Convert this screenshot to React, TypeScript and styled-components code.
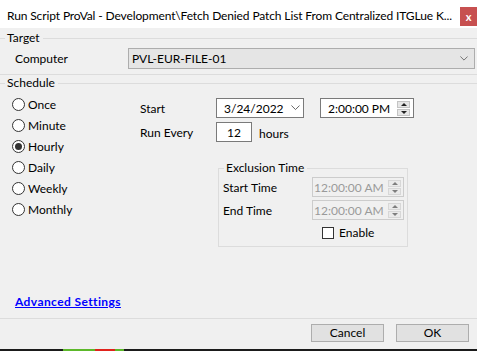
import styled, { createGlobalStyle } from "styled-components";

const GlobalStyle = createGlobalStyle`
  html, body {
    margin: 0;
    padding: 0;
    background: #f0f0f0;
  }
  body {
    font-family: "Segoe UI", Lato, "Liberation Sans", sans-serif;
    font-size: 12px;
    color: #000;
  }
`;

const Window = styled.div`
  width: 477px;
  height: 351px;
  display: flex;
  flex-direction: column;
  background: #f0f0f0;
  overflow: hidden;
`;

const TitleBar = styled.div`
  height: 28px;
  flex: none;
  display: flex;
  align-items: flex-start;
  background: #fff;
`;

const Title = styled.div`
  flex: 1;
  min-width: 0;
  padding: 8px 0 0 7px;
  line-height: 16px;
  font-size: 12px;
  letter-spacing: -0.12px;
  white-space: nowrap;
  overflow: hidden;
`;

const CloseButton = styled.div`
  width: 17px;
  height: 19px;
  flex: none;
  margin-top: 7px;
  background: #c75050;
  color: #fff;
  font-size: 11px;
  font-weight: 700;
  display: flex;
  align-items: center;
  justify-content: center;
`;

const Group = styled.section<{ $grow?: boolean }>`
  display: flex;
  flex-direction: column;
  border-bottom: 1px solid #dcdcdc;
  flex: ${(p) => (p.$grow ? 1 : "none")};
`;

const GroupHeader = styled.div<{ $top?: number }>`
  display: flex;
  align-items: center;
  height: 16px;
  line-height: 16px;
  margin-top: ${(p) => p.$top ?? 0}px;

  &::before {
    content: "";
    width: 5px;
    border-top: 1px solid #dcdcdc;
  }
  &::after {
    content: "";
    flex: 1;
    border-top: 1px solid #dcdcdc;
  }
  span {
    padding: 0 3px 0 2px;
  }
`;

const ComputerRow = styled.div`
  display: flex;
  align-items: center;
  margin-top: 2px;
  padding-bottom: 5px;
`;

const RowLabel = styled.div<{ $width: number; $indent?: number }>`
  box-sizing: border-box;
  width: ${(p) => p.$width}px;
  padding-left: ${(p) => p.$indent ?? 0}px;
  padding-top: ${(p) => (p.$indent ? 0 : 3)}px;
  flex: none;
`;

const Combo = styled.div`
  width: 347px;
  height: 21px;
  box-sizing: border-box;
  background: #e5e5e5;
  border: 1px solid #adadad;
  display: flex;
  align-items: center;
  padding: 0 6px 0 3px;
  justify-content: space-between;
`;

const Columns = styled.div`
  display: flex;
  flex: 1;
`;

const RadioList = styled.div`
  width: 128px;
  padding: 3px 0 0 12px;
  display: flex;
  flex-direction: column;
`;

const RadioRow = styled.label`
  display: flex;
  align-items: center;
  gap: 3px;
  height: 21px;
`;

const RadioDot = styled.span<{ $on?: boolean }>`
  width: 13px;
  height: 13px;
  box-sizing: border-box;
  border: 1px solid #333;
  border-radius: 50%;
  background: #fff;
  display: flex;
  align-items: center;
  justify-content: center;

  &::after {
    content: "";
    width: 7px;
    height: 7px;
    border-radius: 50%;
    background: ${(p) => (p.$on ? "#333" : "transparent")};
  }
`;

const Panel = styled.div`
  display: grid;
  grid-template-columns: 76px auto;
  grid-auto-rows: min-content;
  row-gap: 4px;
  padding-top: 7px;
`;

const Controls = styled.div<{ $gap: number }>`
  display: flex;
  align-items: center;
  gap: ${(p) => p.$gap}px;
`;

const Unit = styled.span`
  padding-top: 3px;
`;

const Field = styled.div<{ $width: number; $disabled?: boolean; $center?: boolean }>`
  width: ${(p) => p.$width}px;
  height: 20px;
  box-sizing: border-box;
  border: 1px solid ${(p) => (p.$disabled ? "#cccccc" : "#7a7a7a")};
  background: ${(p) => (p.$disabled ? "#f0f0f0" : "#fff")};
  color: ${(p) => (p.$disabled ? "#9a9a9a" : "#000")};
  display: flex;
  align-items: center;
  justify-content: ${(p) => (p.$center ? "center" : "space-between")};
  padding: ${(p) => (p.$center ? "0" : p.$disabled ? "0 2px 0 1px" : "0 3px 0 7px")};
`;

const Spinner = styled.div<{ $disabled?: boolean }>`
  width: 13px;
  height: 15px;
  display: flex;
  flex-direction: column;
  gap: 1px;
  opacity: ${(p) => (p.$disabled ? 0.55 : 1)};
`;

const SpinHalf = styled.div<{ $down?: boolean }>`
  flex: 1;
  background: #e6e6e6;
  border: 1px solid #c4c4c4;
  display: flex;
  align-items: center;
  justify-content: center;

  &::after {
    content: "";
    border-left: 3px solid transparent;
    border-right: 3px solid transparent;
    ${(p) => (p.$down ? "border-top: 3px solid #222;" : "border-bottom: 3px solid #222;")}
  }
`;

const Chevron = ({ size }: { size: number }) => (
  <svg width={size} height={size / 2 + 1} viewBox="0 0 10 6" fill="none">
    <path d="M0.5 0.5 L5 5 L9.5 0.5" stroke="#555" strokeWidth="1" />
  </svg>
);

const Exclusion = styled.fieldset`
  grid-column: 2;
  margin: 14px 0 0 2px;
  width: 189px;
  box-sizing: border-box;
  border: 1px solid #dcdcdc;
  padding: 1px 3px 6px 4px;
  display: grid;
  grid-template-columns: 89px auto;
  row-gap: 3px;

  legend {
    padding: 0 3px 0 2px;
    margin-left: 1px;
    line-height: 16px;
  }
`;

const CheckRow = styled.label`
  grid-column: 2;
  display: flex;
  align-items: center;
  gap: 5px;
  padding-left: 10px;
  height: 15px;
  margin-top: 2px;
`;

const CheckBox = styled.span`
  width: 12px;
  height: 12px;
  box-sizing: border-box;
  border: 1px solid #333;
  background: #fff;
`;

const LinkRow = styled.div`
  padding: 0 0 8px 15px;
  line-height: 16px;
`;

const Link = styled.a`
  color: #0000ff;
  font-weight: 700;
  letter-spacing: 0.4px;
  text-decoration: underline;
`;

const Footer = styled.div`
  height: 30px;
  flex: none;
  display: flex;
  justify-content: flex-end;
  align-items: flex-start;
  gap: 12px;
  padding: 5px 8px 0 0;
  box-sizing: border-box;
`;

const Button = styled.button`
  width: 73px;
  height: 18px;
  box-sizing: border-box;
  background: #e1e1e1;
  border: 1px solid #adadad;
  font: inherit;
  line-height: 14px;
  padding: 0;
`;

const Taskbar = styled.div`
  height: 2px;
  flex: none;
  display: flex;
  background: #1b1b1b;
`;

const TaskSeg = styled.div<{ $color: string; $width: number; $left: number }>`
  width: ${(p) => p.$width}px;
  margin-left: ${(p) => p.$left}px;
  background: ${(p) => p.$color};
`;

const radios = ["Once", "Minute", "Hourly", "Daily", "Weekly", "Monthly"];

export default function App() {
  return (
    <>
      <GlobalStyle />
      <Window>
        <TitleBar>
          <Title>
            Run Script ProVal - Development\Fetch Denied Patch List From Centralized ITGLue K...
          </Title>
          <CloseButton>x</CloseButton>
        </TitleBar>

        <Group>
          <GroupHeader $top={2}>
            <span>Target</span>
          </GroupHeader>
          <ComputerRow>
            <RowLabel $width={128} $indent={15}>
              Computer
            </RowLabel>
            <Combo>
              <span>PVL-EUR-FILE-01</span>
              <Chevron size={8} />
            </Combo>
          </ComputerRow>
        </Group>

        <Group $grow>
          <GroupHeader>
            <span>Schedule</span>
          </GroupHeader>
          <Columns>
            <RadioList>
              {radios.map((r) => (
                <RadioRow key={r}>
                  <RadioDot $on={r === "Hourly"} />
                  {r}
                </RadioRow>
              ))}
            </RadioList>
            <Panel>
              <RowLabel $width={76}>Start</RowLabel>
              <Controls $gap={16}>
                <Field $width={88}>
                  <span>3/24/2022</span>
                  <Chevron size={9} />
                </Field>
                <Field $width={94}>
                  <span>2:00:00 PM</span>
                  <Spinner>
                    <SpinHalf />
                    <SpinHalf $down />
                  </Spinner>
                </Field>
              </Controls>
              <RowLabel $width={76}>Run Every</RowLabel>
              <Controls $gap={7}>
                <Field $width={36} $center>
                  12
                </Field>
                <Unit>hours</Unit>
              </Controls>
              <Exclusion>
                <legend>Exclusion Time</legend>
                <RowLabel $width={89}>Start Time</RowLabel>
                <Field $width={92} $disabled>
                  <span>12:00:00 AM</span>
                  <Spinner $disabled>
                    <SpinHalf />
                    <SpinHalf $down />
                  </Spinner>
                </Field>
                <RowLabel $width={89}>End Time</RowLabel>
                <Field $width={92} $disabled>
                  <span>12:00:00 AM</span>
                  <Spinner $disabled>
                    <SpinHalf />
                    <SpinHalf $down />
                  </Spinner>
                </Field>
                <CheckRow>
                  <CheckBox />
                  Enable
                </CheckRow>
              </Exclusion>
            </Panel>
          </Columns>
          <LinkRow>
            <Link href="#">Advanced Settings</Link>
          </LinkRow>
        </Group>

        <Footer>
          <Button>Cancel</Button>
          <Button>OK</Button>
        </Footer>
        <Taskbar>
          <TaskSeg $color="#5cb82a" $width={32} $left={63} />
          <TaskSeg $color="#e0231c" $width={20} $left={0} />
          <TaskSeg $color="#5cb82a" $width={9} $left={0} />
        </Taskbar>
      </Window>
    </>
  );
}
